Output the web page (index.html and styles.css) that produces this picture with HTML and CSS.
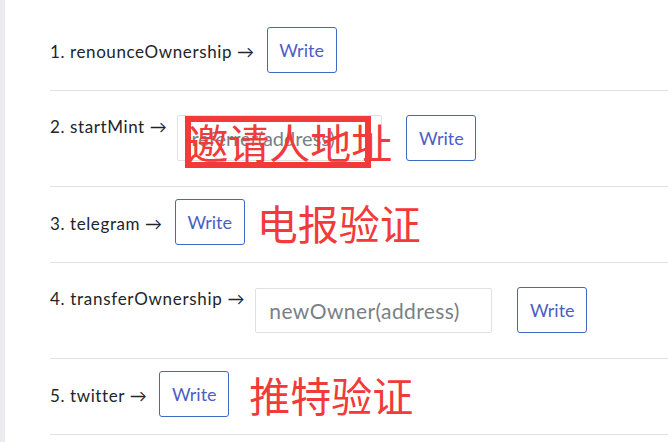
FILE: index.html
```html
<!DOCTYPE html>
<html lang="en">
<head>
<meta charset="utf-8">
<title>Write Contract</title>
<link rel="stylesheet" href="styles.css">
</head>
<body>
<div class="page">
  <div class="list">
    <div class="row">
      <span class="label">1. renounceOwnership →</span>
      <button class="btn">Write</button>
    </div>
    <div class="row top">
      <span class="label">2. startMint →</span>
      <div class="form f2">
        <div class="field">
          <input class="input w205" type="text" placeholder="referrer(address)">
          <div class="mark-box"></div>
          <span class="mark-text">邀请人地址</span>
        </div>
        <button class="btn">Write</button>
      </div>
    </div>
    <div class="row">
      <span class="label">3. telegram →</span>
      <button class="btn">Write</button>
      <span class="note n3">电报验证</span>
    </div>
    <div class="row top">
      <span class="label narrow">4. transferOwnership →</span>
      <div class="form f4">
        <input class="input w237" type="text" placeholder="newOwner(address)">
        <button class="btn">Write</button>
      </div>
    </div>
    <div class="row">
      <span class="label">5. twitter →</span>
      <button class="btn">Write</button>
      <span class="note n5">推特验证</span>
    </div>
  </div>
</div>
</body>
</html>
```
FILE: styles.css
```css
html, body {
  margin: 0;
  padding: 0;
  background: #ffffff;
}
body {
  font-family: "Lato", "Noto Sans", sans-serif;
  color: #212529;
  overflow: hidden;
}
.page {
  border-left: 5px solid #ebebf0;
  min-height: 442px;
  box-sizing: border-box;
  padding: 15px 0 0 45px;
}
.row {
  display: flex;
  align-items: center;
  gap: 12px;
  padding: 12px 0 17px;
  border-bottom: 1px solid #dee2e6;
}
.row.top {
  align-items: flex-start;
}
.label {
  font-size: 17px;
  line-height: 24px;
  letter-spacing: 0.6px;
  white-space: nowrap;
  padding-top: 4px;
}
.row.top .label {
  padding-top: 12px;
}
.label.narrow {
  letter-spacing: 0.7px;
}
.form {
  display: flex;
  align-items: center;
  gap: 24px;
  margin: 12px 0 8px;
}
.form.f2 {
  margin-left: -2px;
}
.form.f4 {
  gap: 25px;
  margin-left: -2px;
}
.field {
  position: relative;
}
.input {
  display: block;
  box-sizing: border-box;
  height: 46px;
  border: 1px solid #dee2e6;
  border-radius: 2px;
  padding: 0 13px;
  font-family: "Lato", "Noto Sans", sans-serif;
  font-size: 20px;
  color: #495057;
  background: #fff;
  outline: none;
}
.input::placeholder {
  color: #7a7f85;
}
.w205 { width: 205px; }
.w237 {
  width: 237px;
  height: 45px;
  font-size: 21px;
  letter-spacing: 0.4px;
}
.btn {
  box-sizing: border-box;
  width: 70px;
  height: 46px;
  padding: 0;
  border: 1px solid #3e6ac4;
  border-radius: 3px;
  background: #fff;
  color: #4b5ec6;
  font-family: "Lato", "Noto Sans", sans-serif;
  font-size: 18px;
  flex: none;
}
.mark-box {
  position: absolute;
  left: 8px;
  top: 1px;
  width: 186px;
  height: 52px;
  box-sizing: border-box;
  border: 6px solid #f23a3a;
}
.mark-text {
  position: absolute;
  left: 10px;
  top: 0px;
  font-family: "Noto Sans CJK SC", sans-serif;
  font-size: 41px;
  line-height: 52px;
  color: #f23a3a;
  white-space: nowrap;
}
.note {
  font-family: "Noto Sans CJK SC", sans-serif;
  font-size: 41px;
  line-height: 46px;
  color: #f23a3a;
  white-space: nowrap;
}
.n3 { margin-left: 0; }
.n5 { margin-left: 8px; }
```
